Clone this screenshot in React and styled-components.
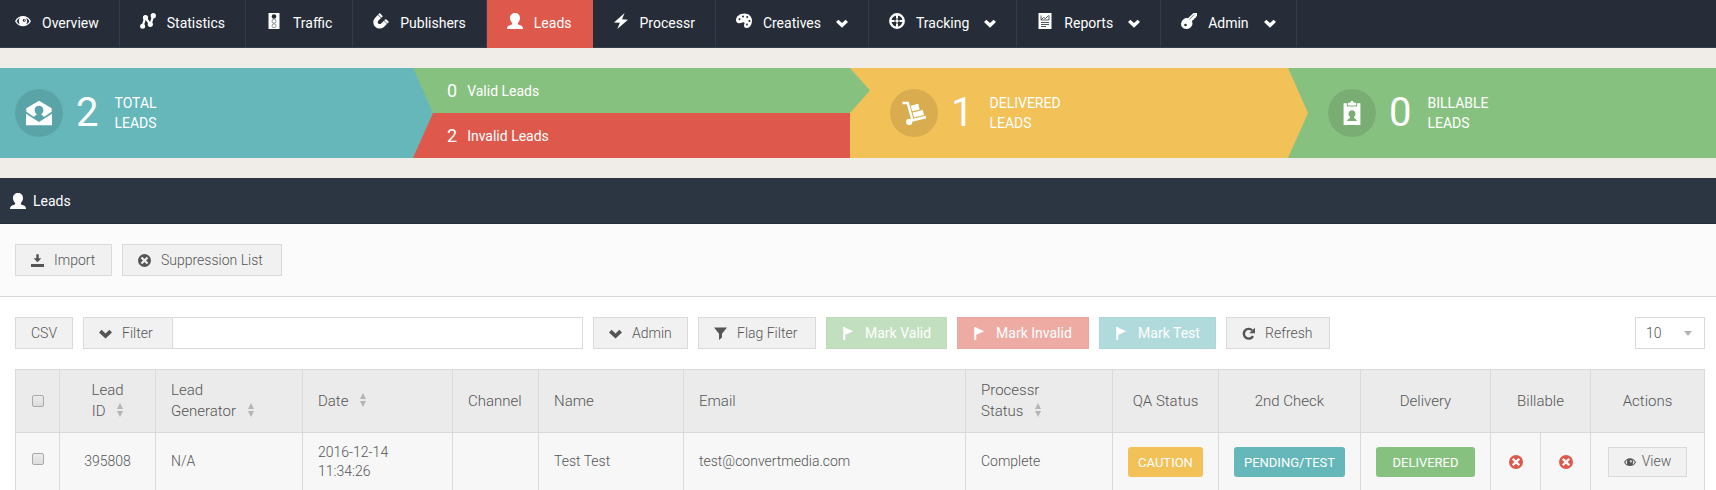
import React from "react";
import styled, { createGlobalStyle } from "styled-components";

const colors = {
  navy: "#262d38",
  navy_line: "#303d4d",
  title: "#2c3542",
  page: "#f0ede8",
  red: "#de594c",
  green: "#87c180",
  teal: "#65b7ba",
  yellow: "#f2c158",
  border: "#dadada",
  button: "#f1f1f1",
  text: "#555555",
};

const GlobalStyle = createGlobalStyle`
  * {
    box-sizing: border-box;
  }

  body {
    margin: 0;
    background: #ffffff;
    color: ${colors.text};
    font-family: Roboto, "Liberation Sans", sans-serif;
    font-size: 14px;
    font-weight: 300;
    line-height: 20px;
  }

  button,
  input,
  select {
    font: inherit;
    color: inherit;
  }
`;

const Svg = styled.svg`
  display: block;
  flex: none;
  width: ${({ $size }) => $size}px;
  height: ${({ $size }) => $size}px;
  fill: currentColor;
`;

const icons = {
  eye: (
    <>
      <path
        fillRule="evenodd"
        d="M0 8.2C2 4.6 4.8 3 8 3s6 1.6 8 5.2C14 11.800 11.200 13.200 8 13.200S2 11.800 0 8.200zM1.600 8.200c.8 1.500 1.900 2.500 3.200 3.100C3.500 9 3.500 7 4.800 5 3.400 5.700 2.400 6.700 1.600 8.200zM11.200 5c1.300 2 1.300 4 0 6.300 1.300-.6 2.400-1.600 3.200-3.100C13.600 6.700 12.600 5.700 11.200 5zM9.200 5.800a1.500 1.500 0 1 0 0 3 1.500 1.500 0 0 0 0-3z"
      />
      <circle cx="9.400" cy="7.200" r=".6" />
    </>
  ),
  statistics: (
    <>
      <path d="M2.500 13.500 5.300 4.500 10.400 11.500 13.300 2.700" fill="none" stroke="currentColor" strokeWidth="2.200" />
      <circle cx="2.600" cy="13.300" r="2.500" />
      <circle cx="5.500" cy="4.500" r="2.600" />
      <circle cx="10.300" cy="11.300" r="2.600" />
      <circle cx="13.300" cy="2.700" r="2.600" />
    </>
  ),
  traffic: (
    <>
      <path d="M2.500 0h11v16h-11z" />
      <circle cx="8" cy="3.500" r="2.300" fill={colors.navy} />
      <circle cx="8" cy="8.200" r="2" fill="none" stroke={colors.navy} strokeWidth=".5" />
      <circle cx="8" cy="12.800" r="2" fill="none" stroke={colors.navy} strokeWidth=".5" />
    </>
  ),
  magnet: (
    <>
      <path
        d="M8.300 1.600 3.700 6.200a4 4 0 0 0 5.900 5.900L14.400 7.500"
        fill="none"
        stroke="currentColor"
        strokeWidth="4.400"
      />
      <path d="m4.800 1.500 3.600 3.600M10.900 7.400l3.600 3.600" stroke={colors.navy} strokeWidth=".8" />
    </>
  ),
  user: (
    <path d="M8 0c2.900 0 5 2 5 5 0 2-.8 3.900-2.200 5 0 1.200.3 1.600 1.700 2.100 2.200.8 3.500 1.500 3.500 3.900H0c0-2.400 1.300-3.100 3.500-3.900 1.400-.5 1.700-.9 1.700-2.100C3.800 8.900 3 7 3 5c0-3 2.100-5 5-5z" />
  ),
  flash: <path d="M11.600 0 1 9.400l5.900.4L4.300 16 15 6.700 9 6.200z" />,
  palette: (
    <>
      <path d="M8.500.5C12.600.5 16 3.300 16 7.500c0 4-2.200 7.500-5.300 7.500-1.600 0-2.700-.8-2.700-2.200 0-1.300.5-1.900.5-2.500 0-.9-.9-1.200-2-.9-1.700.4-3 1.200-4.600.6C.6 9.400 0 8.300 0 7c0-3.600 4-6.500 8.500-6.500z" />
      <g fill={colors.navy}>
        <circle cx="3.500" cy="6.300" r="1" />
        <circle cx="7" cy="3.400" r="1" />
        <circle cx="11.200" cy="4" r="1" />
        <circle cx="13.500" cy="8" r="1.100" />
        <circle cx="11" cy="11.500" r=".9" />
      </g>
    </>
  ),
  target: (
    <>
      <circle cx="8" cy="8" r="6.700" fill="none" stroke="currentColor" strokeWidth="2.400" />
      <path d="M7 1h2v4H7zM7 11h2v4H7zM1 7h4v2H1zM11 7h4v2h-4zM7 7h2v2H7z" />
      <path d="M5 7h2V5h2v2h2v2H9v2H7V9H5z" opacity=".55" />
    </>
  ),
  report: (
    <>
      <path d="M1.500 0h13v16h-13z" />
      <path
        d="M4.500 6.500 6.500 4.500l2 1L11.500 2.500M4 9.500h8M4 11.500h8M4 13.500h5M4 2.500v4.500h8V2.500"
        fill="none"
        stroke={colors.navy}
        strokeWidth=".8"
      />
    </>
  ),
  key: (
    <>
      <path d="M12.500 0H16v3.300l-1 .3-.3 1.400-1.400.4-.5 1.400-1.300.4-.5 1.300c1 2.300.3 4.700-1.800 6.200-2.500 1.900-6.300 1.600-8.200-.6-1.700-2.200-1-5.700 1.300-7.700 1.400-1.200 3-1.600 4.600-1.200z" />
      <circle cx="4.500" cy="12" r="1.300" fill={colors.navy} />
      <path d="m8.300 6.500 5-5" stroke={colors.navy} strokeWidth=".6" />
    </>
  ),
  chevron: <path d="m3.200 3.500 4.800 4.600 4.800-4.600L16 6.800 8 14.200 0 6.800z" />,
  inbox: (
    <>
      <path d="M8 .5 15.800 5v2.200L11 10.500c-.3-.8-1-1.200-1.700-1.600.9-.7 1.400-1.600 1.400-2.700C10.700 4.500 9.600 3.500 8 3.500S5.300 4.500 5.300 6.200c0 1.100.5 2 1.400 2.700-.7.4-1.400.8-1.700 1.600L.2 7.200V5z" />
      <path d="M0 8.500 8 13.600l8-5.100v7H0z" />
    </>
  ),
  cart: (
    <>
      <path d="M.3.500h4.200l3 11.300 8.200-1.900.4 1.700-9.600 2.300L3.200 2.200H.3z" />
      <circle cx="4.800" cy="14" r="2.100" />
      <path d="m5.800 3.100 5-1.300 1 3.800-5 1.300zM7.100 7.700l6.700-1.700.9 3.300-6.700 1.700z" />
    </>
  ),
  clipboard: (
    <>
      <path fillRule="evenodd" d="M2.400 1.500h2.200v2.200h6.800V1.500h2.200V16H2.400zM8 6.200c-1.400 0-2.300 1-2.300 2.300 0 .9.300 1.600 1 2.100 0 1.400-1.900 1-1.900 2.800h6.400c0-1.800-1.900-1.400-1.900-2.800.7-.5 1-1.200 1-2.100 0-1.300-.9-2.300-2.300-2.300z" />
      <path d="M5.200 1.200h1.600C7 .4 7.400 0 8 0s1 .4 1.200 1.200h1.600V3H5.200z" />
    </>
  ),
  download: <path d="M6.500.3h3v5h3.300L8 10.300l-4.800-5h3.300zM0 12.200h16V16H0z" />,
  remove: (
    <path
      fillRule="evenodd"
      d="M8 0a8 8 0 1 1 0 16A8 8 0 0 1 8 0zM5.200 3.300 3.300 5.200 6.100 8l-2.800 2.800 1.900 1.900L8 9.900l2.800 2.800 1.900-1.900L9.900 8l2.800-2.800-1.900-1.900L8 6.100z"
    />
  ),
  funnel: <path d="M0 .5h16l-6.200 7.800V13l-3.600 3V8.300z" />,
  flag: <path d="M1.500 0H4v1l10 4.200L4 9.500V16H1.500z" />,
  refresh: (
    <>
      <path d="M13.500 11.300A6 6 0 1 1 12.500 4" fill="none" stroke="currentColor" strokeWidth="3" />
      <path d="M16 .8v7H8.800z" />
    </>
  ),
};

const Icon = ({ name, size = 16 }) => (
  <Svg viewBox="0 0 16 16" $size={size} aria-hidden="true">
    {icons[name]}
  </Svg>
);

const Nav = styled.nav`
  display: flex;
  height: 48px;
  background: ${colors.navy};
  border-bottom: 1px solid ${colors.navy_line};
`;

const NavLink = styled.a`
  display: flex;
  align-items: center;
  gap: 11px;
  height: 48px;
  padding: 0 20px 6px;
  border-right: 1px solid ${({ $active }) => ($active ? colors.red : colors.navy_line)};
  background: ${({ $active }) => ($active ? colors.red : "none")};
  color: #ffffff;
  font-weight: 400;
  text-decoration: none;
  white-space: nowrap;

  &:first-child {
    padding-left: 15px;
  }
`;

const NavLabel = styled.span`
  padding-top: 3px;
`;

const Caret = styled.span`
  padding: 3px 0 0 4px;
`;

const Stats = styled.section`
  display: grid;
  grid-template-columns: 413fr 437fr 438fr 428fr;
  padding: 20px 0;
  background: ${colors.page};
`;

const Stat = styled.div`
  position: relative;
  display: flex;
  align-items: center;
  height: 90px;
  padding-left: ${({ $first }) => ($first ? 15 : 40)}px;
  background: ${({ $color }) => $color};
  color: #ffffff;
  font-weight: 400;
`;

/* arrow head that overlaps the next panel */
const Arrow = styled.span`
  position: absolute;
  z-index: 1;
  top: 0;
  left: 100%;
  width: 20px;
  height: 100%;
  background: ${({ $color }) => $color};
  clip-path: polygon(0 0, 100% 50%, 0 100%);
`;

const StatCircle = styled.span`
  display: flex;
  align-items: center;
  justify-content: center;
  width: 48px;
  height: 48px;
  border-radius: 50%;
  background: rgba(0, 0, 0, 0.1);
`;

const StatNumber = styled.strong`
  margin: 0 16px 0 13px;
  font-size: 40px;
  font-weight: 400;
  line-height: 48px;
`;

const StatLabel = styled.span`
  width: 80px;
  text-transform: uppercase;
`;

const Split = styled.div`
  display: grid;
  grid-template-rows: 1fr 1fr;
`;

const SplitRow = styled.div`
  position: relative;
  display: flex;
  align-items: center;
  gap: 10px;
  padding-left: 34px;
  background: ${({ $color }) => $color};
  color: #ffffff;
  font-weight: 400;
`;

const SplitNumber = styled.strong`
  font-size: 18px;
  font-weight: 400;
`;

const Title = styled.h1`
  display: flex;
  align-items: center;
  gap: 7px;
  height: 46px;
  margin: 0;
  padding: 0 10px;
  border-bottom: 1px solid ${colors.navy};
  background: ${colors.title};
  color: #ffffff;
  font-size: 14px;
  font-weight: 400;
`;

const Toolbar = styled.div`
  display: flex;
  gap: 10px;
  padding: 20px 15px;
  border-bottom: 1px solid ${colors.border};
  background: #fbfbfb;
  height: 73px;
`;

const Button = styled.button`
  display: flex;
  align-items: center;
  gap: 10px;
  flex: none;
  min-width: ${({ $width }) => $width || 0}px;
  height: 32px;
  padding: 0 15px;
  border: 1px solid ${colors.border};
  background: ${colors.button};
  cursor: pointer;
`;

const MarkButton = styled(Button)`
  border-color: rgba(0, 0, 0, 0.05);
  background: ${({ $color }) => $color};
  color: #ffffff;
  font-weight: 400;
  opacity: 0.5;
  cursor: default;
`;

const Content = styled.main`
  padding: 20px 11px 0 15px;
`;

const Actions = styled.div`
  display: flex;
  gap: 10px;
  margin-bottom: 20px;
`;

const FilterGroup = styled.div`
  display: flex;
  flex: 0 1 500px;
`;

const FilterInput = styled.input`
  flex: 1;
  min-width: 0;
  height: 32px;
  padding: 0 10px;
  border: 1px solid ${colors.border};
  border-left: none;
  background: #ffffff;
`;

const PageSize = styled.div`
  display: grid;
  align-items: center;
  width: 70px;
  margin-left: auto;
  border: 1px solid ${colors.border};

  select,
  svg {
    grid-area: 1 / 1;
  }

  select {
    height: 30px;
    padding: 0 10px;
    border: none;
    border-radius: 0;
    background: none;
    appearance: none;
  }

  svg {
    justify-self: end;
    width: 8px;
    height: 5px;
    margin-right: 12px;
    fill: #b5b5b5;
    pointer-events: none;
  }
`;

const Table = styled.table`
  width: 100%;
  table-layout: fixed;
  border-collapse: collapse;

  th,
  td {
    padding: 0 15px;
    border: 1px solid ${colors.border};
    text-align: left;
  }

  th {
    height: 63px;
    background: #ebebeb;
    font-size: 15px;
    font-weight: 300;
    line-height: 21px;
    white-space: nowrap;
  }

  td {
    height: 58px;
    background: #f7f7f7;
    line-height: 19px;
  }

  .center {
    padding: 0;
    text-align: center;
  }
`;

const SortSvg = styled.svg`
  width: 6px;
  height: 14px;
  margin-left: 8px;
  fill: #b5b5b5;
  vertical-align: -1px;
`;

const Sort = () => (
  <SortSvg viewBox="0 0 6 14" aria-hidden="true">
    <path d="M3 0 6 6H0zM0 8h6l-3 6z" />
  </SortSvg>
);

const Checkbox = styled.input`
  appearance: none;
  display: block;
  width: 12px;
  height: 12px;
  margin: 0 auto;
  border: 1px solid #a9a9a9;
  border-radius: 2px;
  background: linear-gradient(#ececec, #dcdcdc);

  td & {
    margin-bottom: 6px;
  }
`;

const Badge = styled.span`
  display: block;
  height: 30px;
  margin: 0 15px;
  border-radius: 3px;
  background: ${({ $color }) => $color};
  color: #ffffff;
  font-size: 13px;
  font-weight: 400;
  line-height: 31px;
`;

const Status = styled.span`
  display: flex;
  justify-content: center;
  color: ${colors.red};
`;

const ViewButton = styled(Button)`
  gap: 6px;
  height: 30px;
  margin: 0 auto;
`;

const links = [
  { icon: "eye", label: "Overview" },
  { icon: "statistics", label: "Statistics" },
  { icon: "traffic", label: "Traffic" },
  { icon: "magnet", label: "Publishers" },
  { icon: "user", label: "Leads", active: true },
  { icon: "flash", label: "Processr" },
  { icon: "palette", label: "Creatives", menu: true },
  { icon: "target", label: "Tracking", menu: true },
  { icon: "report", label: "Reports", menu: true },
  { icon: "key", label: "Admin", menu: true },
];

const columns = [44, 96, 147, 150, 86, 145, 282, 147, 106, 142, 130, 50, 50, 114];

const StatPanel = ({ icon, iconSize = 24, number, label, color, first, last }) => (
  <Stat $color={color} $first={first}>
    <StatCircle>
      <Icon name={icon} size={iconSize} />
    </StatCircle>
    <StatNumber>{number}</StatNumber>
    <StatLabel>
      {label}
      <br />
      Leads
    </StatLabel>
    {!last && <Arrow $color={color} />}
  </Stat>
);

const LeadsTable = () => (
  <Table>
    <colgroup>
      {columns.map((width, i) => (
        <col key={i} width={width} />
      ))}
    </colgroup>
    <thead>
      <tr>
        <th className="center">
          <Checkbox type="checkbox" aria-label="Select all leads" />
        </th>
        <th className="center">
          Lead
          <br />
          ID <Sort />
        </th>
        <th>
          Lead
          <br />
          Generator <Sort />
        </th>
        <th>
          Date <Sort />
        </th>
        <th>Channel</th>
        <th>Name</th>
        <th>Email</th>
        <th>
          Processr
          <br />
          Status <Sort />
        </th>
        <th className="center">QA Status</th>
        <th className="center">2nd Check</th>
        <th className="center">Delivery</th>
        <th className="center" colSpan={2}>
          Billable
        </th>
        <th className="center">Actions</th>
      </tr>
    </thead>
    <tbody>
      <tr>
        <td className="center">
          <Checkbox type="checkbox" aria-label="Select lead 395808" />
        </td>
        <td className="center">395808</td>
        <td>N/A</td>
        <td>
          2016-12-14
          <br />
          11:34:26
        </td>
        <td />
        <td>Test Test</td>
        <td>test@convertmedia.com</td>
        <td>Complete</td>
        <td className="center">
          <Badge $color={colors.yellow}>CAUTION</Badge>
        </td>
        <td className="center">
          <Badge $color={colors.teal}>PENDING/TEST</Badge>
        </td>
        <td className="center">
          <Badge $color={colors.green}>DELIVERED</Badge>
        </td>
        <td className="center">
          <Status>
            <Icon name="remove" size={14} />
          </Status>
        </td>
        <td className="center">
          <Status>
            <Icon name="remove" size={14} />
          </Status>
        </td>
        <td className="center">
          <ViewButton type="button" $width={77}>
            <Icon name="eye" size={12} />
            View
          </ViewButton>
        </td>
      </tr>
    </tbody>
  </Table>
);

const App = () => {
  return (
    <>
      <GlobalStyle />
      <Nav>
        {links.map(({ icon, label, active, menu }) => (
          <NavLink key={label} href="#" $active={active}>
            <Icon name={icon} />
            <NavLabel>{label}</NavLabel>
            {menu && (
              <Caret>
                <Icon name="chevron" size={12} />
              </Caret>
            )}
          </NavLink>
        ))}
      </Nav>
      <Stats>
        <StatPanel first icon="inbox" iconSize={26} number="2" label="Total" color={colors.teal} />
        <Split>
          <SplitRow $color={colors.green}>
            <SplitNumber>0</SplitNumber>
            Valid Leads
            <Arrow $color={colors.green} />
          </SplitRow>
          <SplitRow $color={colors.red}>
            <SplitNumber>2</SplitNumber>
            Invalid Leads
          </SplitRow>
        </Split>
        <StatPanel icon="cart" number="1" label="Delivered" color={colors.yellow} />
        <StatPanel last icon="clipboard" number="0" label="Billable" color={colors.green} />
      </Stats>
      <Title>
        <Icon name="user" />
        Leads
      </Title>
      <Toolbar>
        <Button type="button" $width={97}>
          <Icon name="download" size={13} />
          Import
        </Button>
        <Button type="button" $width={160}>
          <Icon name="remove" size={13} />
          Suppression List
        </Button>
      </Toolbar>
      <Content>
        <Actions>
          <Button type="button" $width={58}>
            CSV
          </Button>
          <FilterGroup>
            <Button type="button" $width={90}>
              <Icon name="chevron" size={13} />
              Filter
            </Button>
            <FilterInput type="text" aria-label="Filter leads" />
          </FilterGroup>
          <Button type="button" $width={95}>
            <Icon name="chevron" size={13} />
            Admin
          </Button>
          <Button type="button" $width={118}>
            <Icon name="funnel" size={13} />
            Flag Filter
          </Button>
          <MarkButton type="button" disabled $color={colors.green} $width={121}>
            <Icon name="flag" size={13} />
            Mark Valid
          </MarkButton>
          <MarkButton type="button" disabled $color={colors.red} $width={132}>
            <Icon name="flag" size={13} />
            Mark Invalid
          </MarkButton>
          <MarkButton type="button" disabled $color={colors.teal} $width={117}>
            <Icon name="flag" size={13} />
            Mark Test
          </MarkButton>
          <Button type="button" $width={104}>
            <Icon name="refresh" size={13} />
            Refresh
          </Button>
          <PageSize>
            <select aria-label="Leads per page" defaultValue="10">
              <option>10</option>
              <option>25</option>
              <option>50</option>
            </select>
            <svg viewBox="0 0 8 5" aria-hidden="true">
              <path d="M0 0h8L4 5z" />
            </svg>
          </PageSize>
        </Actions>
        <LeadsTable />
      </Content>
    </>
  );
};

export default App;
